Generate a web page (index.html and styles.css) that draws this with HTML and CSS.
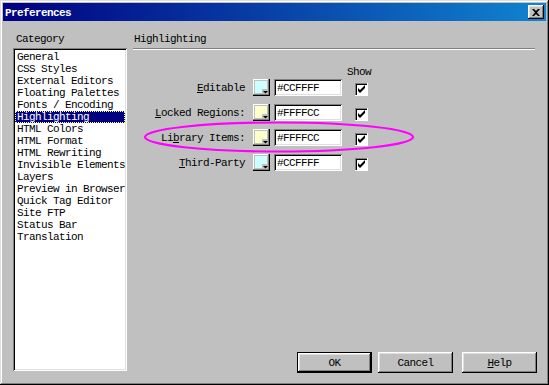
FILE: index.html
```html
<!DOCTYPE html>
<html lang="en">

<head>
    <meta charset="UTF-8">
    <title>Preferences</title>
    <link rel="stylesheet" href="styles.css">
</head>

<body>
    <div class="window">
        <div class="titlebar">
            <span class="title">Preferences</span>
            <span class="close">
                <svg width="8" height="7" viewBox="0 0 8 7">
                    <path d="M0 0h2l2 2 2-2h2L5 3.5 8 7H6L4 5 2 7H0l3-3.5z" fill="#000"/>
                </svg>
            </span>
        </div>
        <div class="content">
            <div class="left">
                <div class="label">Category</div>
                <ul class="list">
                    <li>General</li>
                    <li>CSS Styles</li>
                    <li>External Editors</li>
                    <li>Floating Palettes</li>
                    <li>Fonts / Encoding</li>
                    <li class="selected">Highlighting</li>
                    <li>HTML Colors</li>
                    <li>HTML Format</li>
                    <li>HTML Rewriting</li>
                    <li>Invisible Elements</li>
                    <li>Layers</li>
                    <li>Preview in Browser</li>
                    <li>Quick Tag Editor</li>
                    <li>Site FTP</li>
                    <li>Status Bar</li>
                    <li>Translation</li>
                </ul>
            </div>
            <div class="right">
                <div class="label">Highlighting</div>
                <div class="groove"></div>
                <div class="show">Show</div>
                <div class="rows">
                    <div class="name"><u>E</u>ditable</div>
                    <svg class="swatch" width="17" height="17" viewBox="0 0 17 17">
                        <rect width="17" height="17" fill="#000"/>
                        <rect width="16" height="16" fill="#808080"/>
                        <rect width="15" height="15" fill="#fff"/>
                        <rect x="1" y="1" width="14" height="14" fill="#c0c0c0"/>
                        <rect x="2" y="2" width="12" height="12" fill="#ccffff"/>
                        <rect x="9" y="10" width="6" height="5" fill="#c0c0c0"/>
                        <path d="M10 12h5l-2.5 2.5z" fill="#000"/>
                    </svg>
                    <div class="field">#CCFFFF</div>
                    <svg class="check" width="13" height="13" viewBox="0 0 13 13">
                        <rect width="13" height="13" fill="#fff"/>
                        <rect width="12" height="12" fill="#808080"/>
                        <rect x="1" y="1" width="11" height="11" fill="#000"/>
                        <rect x="2" y="2" width="10" height="10" fill="#fff"/>
                        <path d="M3 5v3l2 2 5-5V2L5 7z" fill="#000"/>
                    </svg>

                    <div class="name"><u>L</u>ocked Regions:</div>
                    <svg class="swatch" width="17" height="17" viewBox="0 0 17 17">
                        <rect width="17" height="17" fill="#000"/>
                        <rect width="16" height="16" fill="#808080"/>
                        <rect width="15" height="15" fill="#fff"/>
                        <rect x="1" y="1" width="14" height="14" fill="#c0c0c0"/>
                        <rect x="2" y="2" width="12" height="12" fill="#ffffcc"/>
                        <rect x="9" y="10" width="6" height="5" fill="#c0c0c0"/>
                        <path d="M10 12h5l-2.5 2.5z" fill="#000"/>
                    </svg>
                    <div class="field">#FFFFCC</div>
                    <svg class="check" width="13" height="13" viewBox="0 0 13 13">
                        <rect width="13" height="13" fill="#fff"/>
                        <rect width="12" height="12" fill="#808080"/>
                        <rect x="1" y="1" width="11" height="11" fill="#000"/>
                        <rect x="2" y="2" width="10" height="10" fill="#fff"/>
                        <path d="M3 5v3l2 2 5-5V2L5 7z" fill="#000"/>
                    </svg>

                    <div class="name">Li<u>b</u>rary Items:</div>
                    <svg class="swatch" width="17" height="17" viewBox="0 0 17 17">
                        <rect width="17" height="17" fill="#000"/>
                        <rect width="16" height="16" fill="#808080"/>
                        <rect width="15" height="15" fill="#fff"/>
                        <rect x="1" y="1" width="14" height="14" fill="#c0c0c0"/>
                        <rect x="2" y="2" width="12" height="12" fill="#ffffcc"/>
                        <rect x="9" y="10" width="6" height="5" fill="#c0c0c0"/>
                        <path d="M10 12h5l-2.5 2.5z" fill="#000"/>
                    </svg>
                    <div class="field">#FFFFCC</div>
                    <svg class="check" width="13" height="13" viewBox="0 0 13 13">
                        <rect width="13" height="13" fill="#fff"/>
                        <rect width="12" height="12" fill="#808080"/>
                        <rect x="1" y="1" width="11" height="11" fill="#000"/>
                        <rect x="2" y="2" width="10" height="10" fill="#fff"/>
                        <path d="M3 5v3l2 2 5-5V2L5 7z" fill="#000"/>
                    </svg>

                    <div class="name"><u>T</u>hird-Party</div>
                    <svg class="swatch" width="17" height="17" viewBox="0 0 17 17">
                        <rect width="17" height="17" fill="#000"/>
                        <rect width="16" height="16" fill="#808080"/>
                        <rect width="15" height="15" fill="#fff"/>
                        <rect x="1" y="1" width="14" height="14" fill="#c0c0c0"/>
                        <rect x="2" y="2" width="12" height="12" fill="#ccffff"/>
                        <rect x="9" y="10" width="6" height="5" fill="#c0c0c0"/>
                        <path d="M10 12h5l-2.5 2.5z" fill="#000"/>
                    </svg>
                    <div class="field">#CCFFFF</div>
                    <svg class="check" width="13" height="13" viewBox="0 0 13 13">
                        <rect width="13" height="13" fill="#fff"/>
                        <rect width="12" height="12" fill="#808080"/>
                        <rect x="1" y="1" width="11" height="11" fill="#000"/>
                        <rect x="2" y="2" width="10" height="10" fill="#fff"/>
                        <path d="M3 5v3l2 2 5-5V2L5 7z" fill="#000"/>
                    </svg>
                </div>
                <div class="buttons">
                    <button class="btn default">OK</button>
                    <button class="btn">Cancel</button>
                    <button class="btn help"><u>H</u>elp</button>
                </div>
            </div>
        </div>
        <!-- hand-drawn marker round the Library Items row -->
        <svg class="marker" width="274" height="34" viewBox="0 0 274 34">
            <ellipse cx="137" cy="16" rx="134" ry="14.5" fill="none" stroke="#ff00ff" stroke-width="2.2"/>
        </svg>
    </div>
</body>

</html>
```

FILE: styles.css
```css
* {
    margin: 0;
    padding: 0;
    box-sizing: border-box;
}

body {
    background: #c0c0c0;
    font-family: "Liberation Mono", "DejaVu Sans Mono", monospace;
    font-size: 11px;
    letter-spacing: -0.6px;
    line-height: 12px;
    color: #000;
}

.window {
    position: relative;
    width: 549px;
    height: 385px;
    padding: 3px;
    background: #c0c0c0;
    box-shadow: inset -1px -1px #000, inset 1px 1px #dfdfdf, inset -2px -2px #808080, inset 2px 2px #fff;
}

/* title bar */
.titlebar {
    display: flex;
    align-items: center;
    height: 18px;
    padding: 0 2px 0 2px;
    background: linear-gradient(to right, #000080, #1084d0);
}

.title {
    flex: 1;
    color: #fff;
    font-weight: bold;
    padding-top: 1px;
}

.close {
    display: flex;
    align-items: center;
    justify-content: center;
    width: 16px;
    height: 14px;
    background: #c0c0c0;
    box-shadow: inset -1px -1px #000, inset 1px 1px #fff, inset -2px -2px #808080, inset 2px 2px #dfdfdf;
}

/* body of dialog */
.content {
    display: flex;
    height: 361px;
    padding: 12px 9px 11px 10px;
    gap: 6px;
}

.left {
    display: flex;
    flex-direction: column;
    width: 114px;
}

.label {
    height: 12px;
    padding-left: 3px;
}

.list {
    list-style: none;
    flex: 1;
    margin-top: 3px;
    padding: 3px 2px 2px;
    background: #fff;
    box-shadow: inset 1px 1px #808080, inset -1px -1px #fff, inset 2px 2px #000, inset -2px -2px #dfdfdf;
}

.list li {
    height: 12px;
    padding-left: 2px;
    white-space: nowrap;
    overflow: hidden;
}

.list li.selected {
    background: #000080;
    color: #fff;
    outline: 1px dotted #ffff80;
    outline-offset: -1px;
}

.right {
    flex: 1;
    display: flex;
    flex-direction: column;
}

.right .label {
    padding-left: 1px;
}

.groove {
    height: 2px;
    margin: 3px 2px 0 0;
    border-top: 1px solid #808080;
    border-bottom: 1px solid #fff;
}

.show {
    width: 238px;
    margin-top: 16px;
    text-align: right;
}

.rows {
    display: grid;
    grid-template-columns: 120px 21px 81px 13px;
    grid-auto-rows: 17px;
    row-gap: 8px;
    margin-top: 1px;
    align-items: center;
}

.name {
    text-align: right;
    padding-right: 8px;
    white-space: nowrap;
}

.swatch {
    display: block;
}

.field {
    width: 68px;
    height: 17px;
    padding: 3px 0 0 3px;
    background: #fff;
    box-shadow: inset 1px 1px #808080, inset -1px -1px #fff, inset 2px 2px #000, inset -2px -2px #dfdfdf;
}

.check {
    display: block;
    align-self: end;
}

.buttons {
    display: flex;
    margin-top: auto;
    margin-bottom: -2px;
    padding-left: 164px;
}

.btn {
    width: 75px;
    height: 21px;
    margin-right: 6px;
    border: none;
    background: #c0c0c0;
    font: inherit;
    letter-spacing: inherit;
    color: #000;
    box-shadow: inset -1px -1px #000, inset 1px 1px #fff, inset -2px -2px #808080, inset 2px 2px #dfdfdf;
}

.btn.default {
    border: 1px solid #000;
}

.btn.help {
    margin-left: 3px;
    margin-right: 0;
}

.marker {
    position: absolute;
    left: 142px;
    top: 121px;
}
```
